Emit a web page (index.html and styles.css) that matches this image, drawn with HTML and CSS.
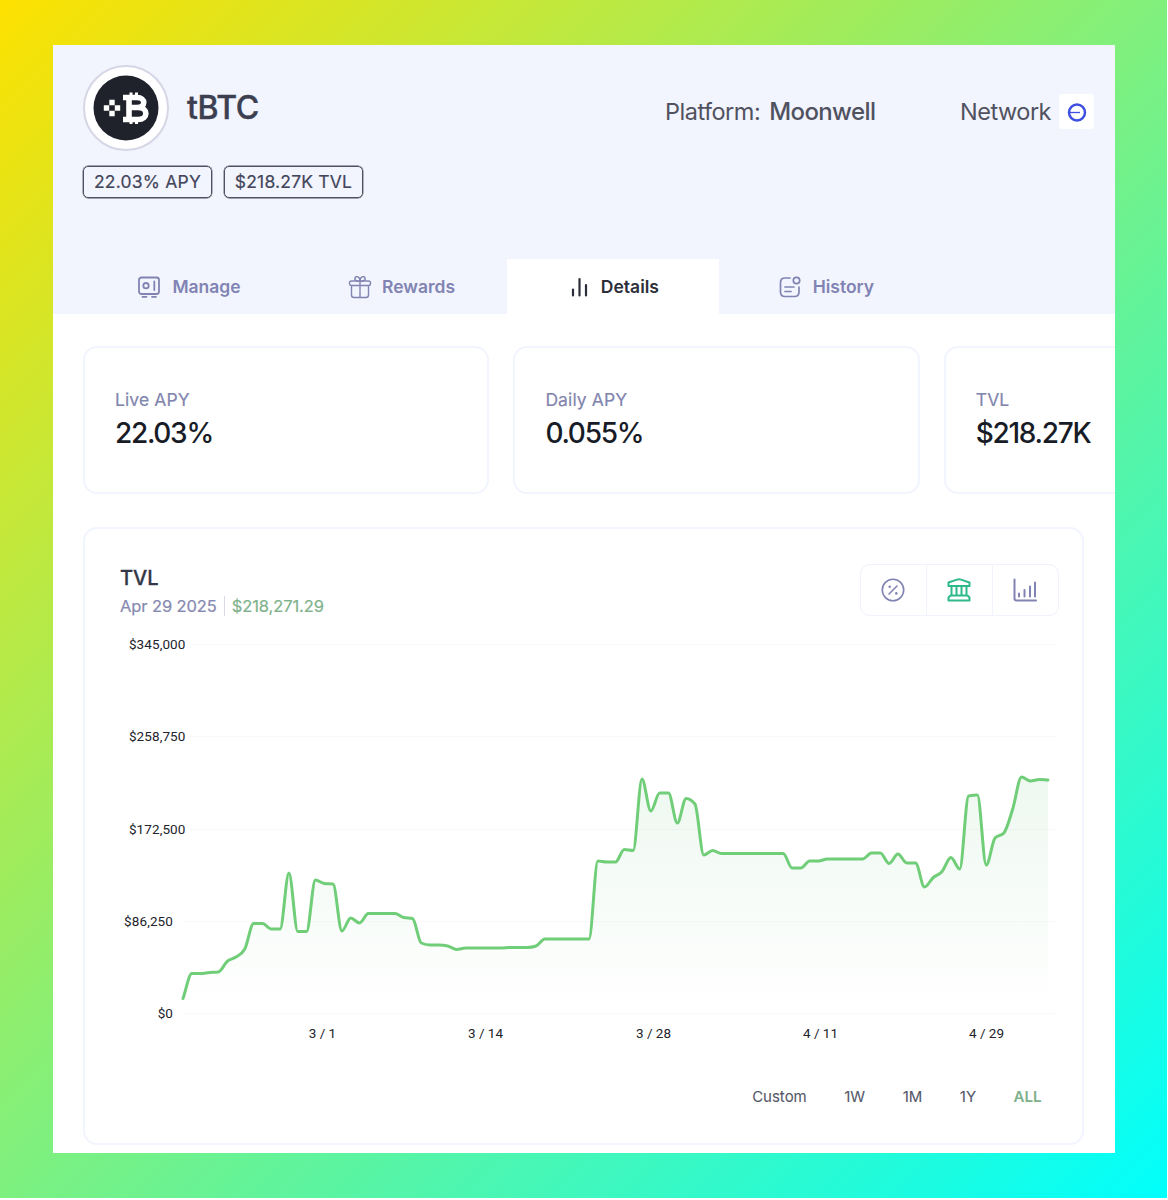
FILE: index.html
```html
<!DOCTYPE html>
<html lang="en">
<head>
<meta charset="utf-8">
<title>tBTC vault details</title>
<link rel="stylesheet" href="styles.css">
</head>
<body>
<div class="backdrop">
<main class="panel">
  <header class="header">
    <div class="title-row">
      <div class="token">
        <svg class="token-logo" viewBox="0 0 66 66">
          <circle cx="33" cy="33" r="32.5" fill="#1f222a"/>
          <g fill="#fff">
            <path d="M16.300 24.800h5.400v5.400h-5.400zM16.300 35.800h5.400v5.400h-5.400zM10.800 30.300h5.400v5.400h-5.400zM21.800 30.300h5.400v5.400h-5.400z"/>
          </g>
          <g fill="none" stroke="#fff" stroke-width="5.600">
            <path d="M30 22.500h14c9 0 9 10 0 10h-8h9c10.500 0 10.500 12 0 12H30M36 22.500v22" stroke-linejoin="round"/>
            <path d="M38 17.500v5M43.500 17.500v5M38 44v5M43.500 44v5" stroke-width="3"/>
          </g>
        </svg>
      </div>
      <h1 class="token-name">tBTC</h1>
      <div class="platform"><span class="platform-label">Platform:</span><span class="platform-name">Moonwell</span></div>
      <div class="network"><span class="network-label">Network</span>
        <span class="network-icon"><svg width="20" height="20" viewBox="0 0 20 20" fill="none" stroke="#3f50e0"><circle cx="10" cy="10.500" r="8" stroke-width="2.500"/><path d="M3 10.500h10" stroke-width="1.300"/></svg></span>
      </div>
    </div>
    <div class="badges"><span class="badge badge-apy">22.03% APY</span><span class="badge badge-tvl">$218.27K TVL</span></div>
    <nav class="tabs">
      <a class="tab"><svg width="22" height="22" viewBox="0 0 22 22" fill="none" stroke="currentColor" stroke-width="1.800"><rect x="1" y="1.500" width="20" height="16.500" rx="2.500"/><circle cx="8" cy="9.700" r="2.700"/><path d="M16.300 5.500v8.500M4.500 20.800h4M14 20.800h4" stroke-linecap="round"/></svg><span>Manage</span></a>
      <a class="tab tab-rewards"><svg width="24" height="24" viewBox="0 0 24 24" fill="none" stroke="currentColor" stroke-width="1.400"><rect x="1.500" y="6" width="21" height="4.500" rx="2"/><path d="M3.500 10.500v9.500q0 2.500 2.500 2.500h12q2.500 0 2.500-2.500v-9.500M12 6v16.500M12 6C10 7 6 5.500 7 3c1-2.500 5-1.500 5 3c0-4.500 4-5.500 5-3c1 2.500-3 4-5 3"/></svg><span>Rewards</span></a>
      <a class="tab tab-active"><svg width="20" height="22" viewBox="0 0 20 22" fill="none" stroke="currentColor" stroke-width="2.200" stroke-linecap="round"><path d="M4 13.500v6M10.500 3v16.500M17 9v10.500"/></svg><span>Details</span></a>
      <a class="tab tab-history"><svg width="22" height="22" viewBox="0 0 22 22" fill="none" stroke="currentColor" stroke-width="1.700" stroke-linecap="round"><path d="M11 2H6Q1.500 2 1.500 6.500v9.500q0 4.500 4.500 4.500h9.500q4.500 0 4.500-4.500v-5M6 11h9M6 15.500h6"/><circle cx="17.500" cy="4.500" r="3.200"/></svg><span>History</span></a>
    </nav>
  </header>

  <section class="stats">
    <div class="stat"><span class="stat-label">Live APY</span><span class="stat-value">22.03%</span></div>
    <div class="stat"><span class="stat-label">Daily APY</span><span class="stat-value">0.055%</span></div>
    <div class="stat"><span class="stat-label">TVL</span><span class="stat-value">$218.27K</span></div>
  </section>

  <section class="chart-card">
    <div class="chart-head">
      <div>
        <h2 class="chart-title">TVL</h2>
        <div class="chart-sub"><span class="chart-date">Apr 29 2025</span><span class="chart-value">$218,271.29</span></div>
      </div>
      <div class="switcher">
        <button class="switch"><svg width="24" height="24" viewBox="0 0 24 24" fill="none" stroke="currentColor" stroke-width="1.600" stroke-linecap="round"><circle cx="12" cy="12" r="10.700"/><path d="M8 16l8-8"/><path d="M8.700 8.700v.1M15.300 15.300v.1" stroke-width="2.500"/></svg></button>
        <button class="switch switch-on"><svg width="24" height="24" viewBox="0 0 24 24" fill="none" stroke="currentColor" stroke-width="2" stroke-linejoin="round"><path d="M1.500 4.500L10 1.600q2-.6 4 0l8.500 2.900v3.500h-21zM4.500 8v9.500M9.500 8v9.500M14.500 8v9.500M19.500 8v9.500M3.500 17.500h17l2 2v3h-21v-3z"/></svg></button>
        <button class="switch"><svg width="24" height="24" viewBox="0 0 24 24" fill="none" stroke="currentColor" stroke-width="2" stroke-linecap="round" stroke-linejoin="round"><path d="M1.500 1.500v19q0 2 2 2H23"/><path d="M6 15.500v3M11.500 12v6.500M17 8.500v10M22 4.500v14"/></svg></button>
      </div>
    </div>
    <svg class="chart" width="960" height="420" viewBox="100 630 960 420">
      <defs><linearGradient id="area-fill" gradientUnits="userSpaceOnUse" x1="0" y1="777" x2="0" y2="1013"><stop offset="0" stop-color="#66bf7b" stop-opacity=".11"/><stop offset="1" stop-color="#66bf7b" stop-opacity="0"/></linearGradient></defs>
      <path class="grid" d="M190 644.500H1057M190 736.500H1057M190 829.500H1057M183 921.500H1057M183 1013.500H1057"/>
      <path class="area" fill="url(#area-fill)"/>
      <path class="line"/>
      <g class="axis axis-y">
        <text x="185.500" y="649">$345,000</text><text x="185.500" y="741">$258,750</text><text x="185.500" y="833.500">$172,500</text><text x="173" y="926">$86,250</text><text x="173" y="1018">$0</text>
      </g>
      <g class="axis axis-x">
        <text x="322.500" y="1038">3 / 1</text><text x="485.500" y="1038">3 / 14</text><text x="653.500" y="1038">3 / 28</text><text x="820.500" y="1038">4 / 11</text><text x="986.500" y="1038">4 / 29</text>
      </g>
    </svg>
    <div class="ranges"><span>Custom</span><span>1W</span><span>1M</span><span>1Y</span><span class="range-on">ALL</span></div>
  </section>
</main>
</div>
<script src="chart.js"></script>
</body>
</html>
```
FILE: styles.css
```css
* { box-sizing: border-box; }
body { margin: 0; background: #fff; font-family: Inter, "Liberation Sans", sans-serif; color: #20232f; }
h1, h2 { margin: 0; font-weight: 500; }
.backdrop { width: 1167px; height: 1198px; padding: 45px 52px 45px 53px; background: linear-gradient(135deg, #fde100 0%, #00fffc 100%); }
.panel { height: 1108px; background: #fff; overflow: hidden; }
.header { height: 269px; background: #f2f4fe; padding: 20px 21px 0 30px; display: flex; flex-direction: column; }
.title-row { display: flex; align-items: center; height: 86px; }
.token { width: 86px; height: 86px; border: 2.500px solid #d6d6e6; border-radius: 50%; background: #fff; display: flex; align-items: center; justify-content: center; flex: none; }
.token-logo { width: 66px; height: 66px; }
.token-name { margin-left: 18px; width: 478px; font-size: 32px; line-height: 40px; letter-spacing: -0.400px; color: #3b3f50; -webkit-text-stroke: .4px; }
.platform { display: flex; width: 295px; font-size: 24px; line-height: 30px; color: #50525f; padding-top: 7px; gap: 9px; }
.platform-label, .network-label { font-weight: 400; font-size: 23.500px; letter-spacing: -0.500px; }
.platform-name { font-weight: 500; letter-spacing: -0.600px; }
.network { display: flex; align-items: center; gap: 8px; margin-left: auto; font-size: 24px; line-height: 30px; color: #50525f; padding-top: 7px; }
.network-icon { width: 35px; height: 35px; background: #fff; border-radius: 3px; display: flex; align-items: center; justify-content: center; }
.badges { display: flex; gap: 12px; margin-top: 15px; }
.badge { height: 32px; border: 1.500px solid #4f5162; border-radius: 5px; font-size: 17.500px; line-height: 30px; text-align: center; color: #43465a; letter-spacing: .2px; box-shadow: 0 0 0 .4px #4f5162; -webkit-text-stroke: .2px; }
.badge-apy { width: 129px; }
.badge-tvl { width: 139px; }
.tabs { display: flex; margin-top: auto; height: 55px; }
.tab { width: 212px; display: flex; align-items: center; justify-content: center; gap: 12px; padding-left: 1px; color: #8184b2; font-size: 17.500px; font-weight: 600; }
.tab-rewards { gap: 10px; }
.tab-active { background: #fff; color: #2c2e3a; margin-left: .4px; }
.tab-history { width: 213px; }
.stats { display: flex; gap: 24px; padding: 32px 0 0 30px; }
.stat { flex: 0 0 406.400px; height: 148px; border: 2px solid #f2f4fe; border-radius: 14px; padding: 41px 30px 0; display: flex; flex-direction: column; }
.stat-label { font-size: 17.500px; line-height: 22px; color: #8285ae; letter-spacing: .1px; -webkit-text-stroke: .2px; }
.stat-value { font-size: 28px; line-height: 36px; margin-top: 4px; font-weight: 500; color: #171c26; letter-spacing: -1.300px; }
.chart-card { width: 1001px; height: 618px; margin: 33px 0 0 30px; border: 2px solid #f2f4fe; border-radius: 14px; padding: 35px 23.500px 0 15px; }
.chart-head { display: flex; justify-content: space-between; padding-left: 20px; height: 66px; }
.chart-title { font-size: 20px; line-height: 28px; color: #343748; -webkit-text-stroke: .3px; }
.chart-sub { display: flex; font-size: 16.500px; line-height: 20px; margin-top: 4px; letter-spacing: -.1px; -webkit-text-stroke: .2px; }
.chart-date { color: #8689b0; padding-right: 7px; border-right: 1px solid #d9dae8; }
.chart-value { color: #7fb28c; padding-left: 7px; }
.switcher { display: flex; height: 52px; width: 199px; border: 1px solid #f0f2fc; border-radius: 10px; }
.switch { flex: 1; padding: 0; border: 0; background: none; color: #8184b2; display: flex; align-items: center; justify-content: center; }
.switch + .switch { border-left: 1px solid #f0f2fc; }
.switch-on { color: #2eb98a; }
.chart { display: block; }
.grid { stroke: #f9f9fb; stroke-width: 1; }
.line { fill: none; stroke: #70cd78; stroke-width: 3; stroke-linejoin: round; stroke-linecap: round; }
.axis { font-family: Roboto, sans-serif; font-size: 13.500px; font-weight: 400; fill: #22232b; }
.axis-y { text-anchor: end; letter-spacing: .1px; }
.axis-x { text-anchor: middle; }
.ranges { display: flex; justify-content: flex-end; gap: 37.500px; padding: 36px 17px 0 0; font-size: 15px; line-height: 22px; color: #565868; -webkit-text-stroke: .1px; }
.range-on { color: #7fb28c; font-weight: 600; }
```
FILE: chart.js
```js
// Daily TVL samples as vertical positions on the chart canvas.
const ys = [998.5,973.5,973.5,972.5,972,961.5,957,949,923.5,923.5,929,929,873,931.5,931.5,880,883.5,884,931,918,923,
  913.5,913.5,913.5,913.5,917.5,918.5,943,945,945,946,949.5,948,948,948,948,948,947.5,947.5,947.5,946,939,939,939,939,939,939,
  861,862,862,849.5,850.5,779,811,793,793,823,798.5,804,855,850.5,853.5,853.5,853.5,853.5,853.5,853.5,853.5,853.5,868,868,861,861,
  859,859,859,859,859,853,853,863.5,854,863,863,887,877.5,871.5,857.5,869,796,795,865,838,833,809,777,781,779.5,780];
const x0 = 183, step = 865 / (ys.length - 1);
const slope = ys.slice(1).map((y, i) => (y - ys[i]) / step);
// Monotone tangents keep the curve from overshooting its samples.
const tangent = ys.map((_, i) => {
  if (i === 0) return slope[0];
  if (i === ys.length - 1) return slope[i - 1];
  const a = slope[i - 1], b = slope[i];
  if (a * b <= 0) return 0;
  return Math.sign(a) * Math.min(Math.abs(a), Math.abs(b), Math.abs(a + b) / 4) * 2;
});
let d = `M${x0} ${ys[0]}`;
for (let i = 1; i < ys.length; i++) {
  const xa = x0 + (i - 1) * step, xb = x0 + i * step, h = step / 3;
  d += `C${xa + h} ${ys[i - 1] + tangent[i - 1] * h} ${xb - h} ${ys[i] - tangent[i] * h} ${xb} ${ys[i]}`;
}
document.querySelector('.line').setAttribute('d', d);
document.querySelector('.area').setAttribute('d', d + 'V1013H183Z');
```
